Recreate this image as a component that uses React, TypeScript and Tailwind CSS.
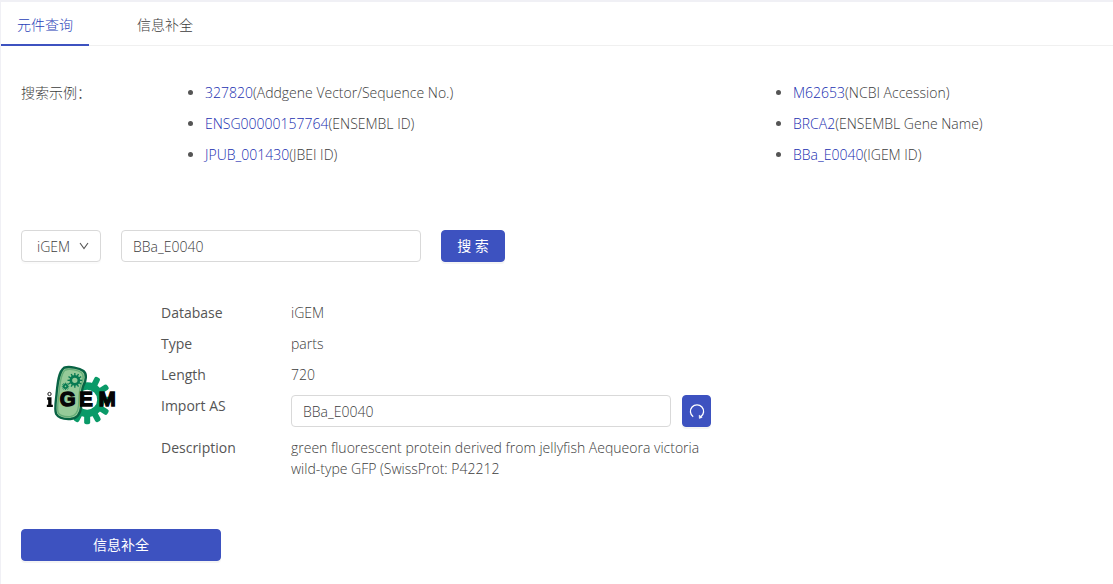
import { useState } from 'react';

const examples = [
  [
    { id: '327820', note: '(Addgene Vector/Sequence No.)' },
    { id: 'ENSG00000157764', note: '(ENSEMBL ID)' },
    { id: 'JPUB_001430', note: '(JBEI ID)' },
  ],
  [
    { id: 'M62653', note: '(NCBI Accession)' },
    { id: 'BRCA2', note: '(ENSEMBL Gene Name)' },
    { id: 'BBa_E0040', note: '(IGEM ID)' },
  ],
];

const teeth = [-64, -33, 0, 33, 62, 90, 118];
const smallTeeth = [0, 30, 60, 90, 120, 150, 180, 210, 240, 270, 300, 330];

function IgemLogo() {
  return (
    <svg viewBox="0 0 285 240" className="h-20 w-24 shrink-0" role="img" aria-label="iGEM">
      <g transform="translate(155 134)">
        {teeth.map((a) => (
          <rect key={a} x="44" y="-9" width="30" height="18" rx="6" fill="#0a9a68" transform={`rotate(${a})`} />
        ))}
        <circle r="41" fill="#fff" stroke="#0a9a68" strokeWidth="22" />
      </g>
      <path
        d="M86 38C102 33 132 39 144 48C155 57 152 76 144 91C136 108 139 132 137 154C135 177 124 190 105 192C88 193 69 189 62 177C56 163 61 140 63 118C66 90 68 50 86 38Z"
        fill="#96ca99"
        stroke="#086344"
        strokeWidth="7"
      />
      <path
        d="M90 45C104 41 128 45 138 53C147 62 142 79 136 92C129 108 131 133 129 153C127 174 118 183 104 185C89 186 74 183 68 173C64 160 68 140 70 118C73 92 75 54 90 45Z"
        fill="none"
        stroke="#65ad78"
        strokeWidth="4"
      />
      <g fill="none" stroke="#087a52">
        <g transform="translate(118 76)">
          <circle r="12" strokeWidth="8" />
          {smallTeeth.map((a) => (
            <path key={a} d="M14 0H22" strokeWidth="4" transform={`rotate(${a})`} />
          ))}
        </g>
        <g transform="translate(90 94)">
          <circle r="5" strokeWidth="5" />
          {smallTeeth.map((a) => (
            <path key={a} d="M6 0H11" strokeWidth="2.5" transform={`rotate(${a})`} />
          ))}
        </g>
      </g>
      <circle cx="42" cy="117" r="5" fill="#fff" stroke="#222" strokeWidth="3" />
      <path d="M35 127H48V149H52V156H34V149H38V134H35Z" fill="#050505" />
      <g
        fontFamily="'Liberation Sans', Arial, sans-serif"
        fontWeight="700"
        fontSize="61"
        fill="#050505"
        stroke="#050505"
        strokeWidth="4"
      >
        <text x="73" y="154">G</text>
        <text x="131" y="154">E</text>
        <text x="190" y="154">M</text>
      </g>
    </svg>
  );
}

const primary =
  'h-8 cursor-pointer rounded-sm border border-[#3d52c0] bg-[#3d52c0] font-normal text-white shadow-[0_2px_0_rgba(0,0,0,0.045)]';
const field = 'h-8 rounded-sm border border-[#d9d9d9] bg-white px-[11px] outline-none focus:border-[#3d52c0]';
const label = 'w-[130px] shrink-0 font-medium text-[#555]';

export default function App() {
  const [tab, setTab] = useState(0);
  const [query, setQuery] = useState('BBa_E0040');
  const [name, setName] = useState('BBa_E0040');

  return (
    <div className="min-h-screen border-t-2 border-l border-[#f0f0f5] bg-white font-['Open_Sans','Noto_Sans_CJK_SC',sans-serif] text-sm leading-[21px] font-light text-[#3c3c3c]">
      <nav role="tablist" className="flex h-11 gap-8 border-b border-[#f0f0f0]">
        {['元件查询', '信息补全'].map((t, i) => (
          <button
            key={t}
            type="button"
            role="tab"
            aria-selected={tab === i}
            onClick={() => setTab(i)}
            className={
              tab === i
                ? 'h-11 cursor-pointer border-b-2 border-[#3d52c0] px-4 pt-0.5 text-[#2a3fb8]'
                : 'h-11 cursor-pointer border-b-2 border-transparent px-4 pt-0.5'
            }
          >
            {t}
          </button>
        ))}
      </nav>

      <main className="px-5 pt-9 pb-5">
        <section className="grid grid-cols-[144px_588fr_340fr]">
          <p>搜索示例：</p>
          {examples.map((list, i) => (
            <ul key={i} className="list-disc space-y-[10px] pl-10 marker:text-[#555]">
              {list.map((e) => (
                <li key={e.id}>
                  <a href={`#${e.id}`} className="text-[#1a2fb0]">{e.id}</a>
                  {e.note}
                </li>
              ))}
            </ul>
          ))}
        </section>

        <form className="mt-[65px] flex gap-5" onSubmit={(e) => e.preventDefault()}>
          <div className="relative">
            <select
              aria-label="Database"
              className="h-8 w-20 appearance-none rounded-sm border border-[#d9d9d9] bg-white pl-[15px] shadow-[0_2px_0_rgba(0,0,0,0.016)] outline-none"
            >
              <option>iGEM</option>
              <option>NCBI</option>
              <option>ENSEMBL</option>
            </select>
            <svg viewBox="0 0 10 8" className="pointer-events-none absolute top-3 right-3 h-2 w-2.5" fill="none" stroke="#555" strokeWidth="1.1">
              <path d="M1 1L5 6.5L9 1" />
            </svg>
          </div>
          <input aria-label="Search" className={`${field} w-[300px]`} value={query} onChange={(e) => setQuery(e.target.value)} />
          <button type="submit" className={`${primary} w-16 pb-0.5`}>搜 索</button>
        </form>

        <section className="mt-10 flex gap-5">
          <div className="flex w-[120px] shrink-0 items-center justify-center pt-2 pl-1">
            <IgemLogo />
          </div>
          <dl className="space-y-[10px]">
            <div className="flex">
              <dt className={label}>Database</dt>
              <dd>iGEM</dd>
            </div>
            <div className="flex">
              <dt className={label}>Type</dt>
              <dd>parts</dd>
            </div>
            <div className="flex">
              <dt className={label}>Length</dt>
              <dd>720</dd>
            </div>
            <div className="flex">
              <dt className={label}>
                <label htmlFor="import-as">Import AS</label>
              </dt>
              <dd className="flex gap-[11px]">
                <input id="import-as" className={`${field} w-[380px]`} value={name} onChange={(e) => setName(e.target.value)} />
                <button type="button" aria-label="Reset name" onClick={() => setName('BBa_E0040')} className={`${primary} flex w-[29px] items-center justify-center`}>
                  <svg viewBox="0 0 16 16" className="size-4 shrink-0" fill="none" stroke="#fff" strokeWidth="1.3">
                    <path d="M4.2 13.8A6.6 6.6 0 1 1 11.8 13.8" />
                    <path d="M10.2 12.2L13.2 14.3L10.4 15.4Z" fill="#fff" strokeWidth="0.6" />
                  </svg>
                </button>
              </dd>
            </div>
            <div className="flex">
              <dt className={label}>Description</dt>
              <dd className="max-w-[420px]">
                green fluorescent protein derived from jellyfish Aequeora victoria wild-type GFP (SwissProt: P42212
              </dd>
            </div>
          </dl>
        </section>

        <button type="button" className={`${primary} mt-[50px] block w-[200px] pb-0.5`}>信息补全</button>
      </main>
    </div>
  );
}
